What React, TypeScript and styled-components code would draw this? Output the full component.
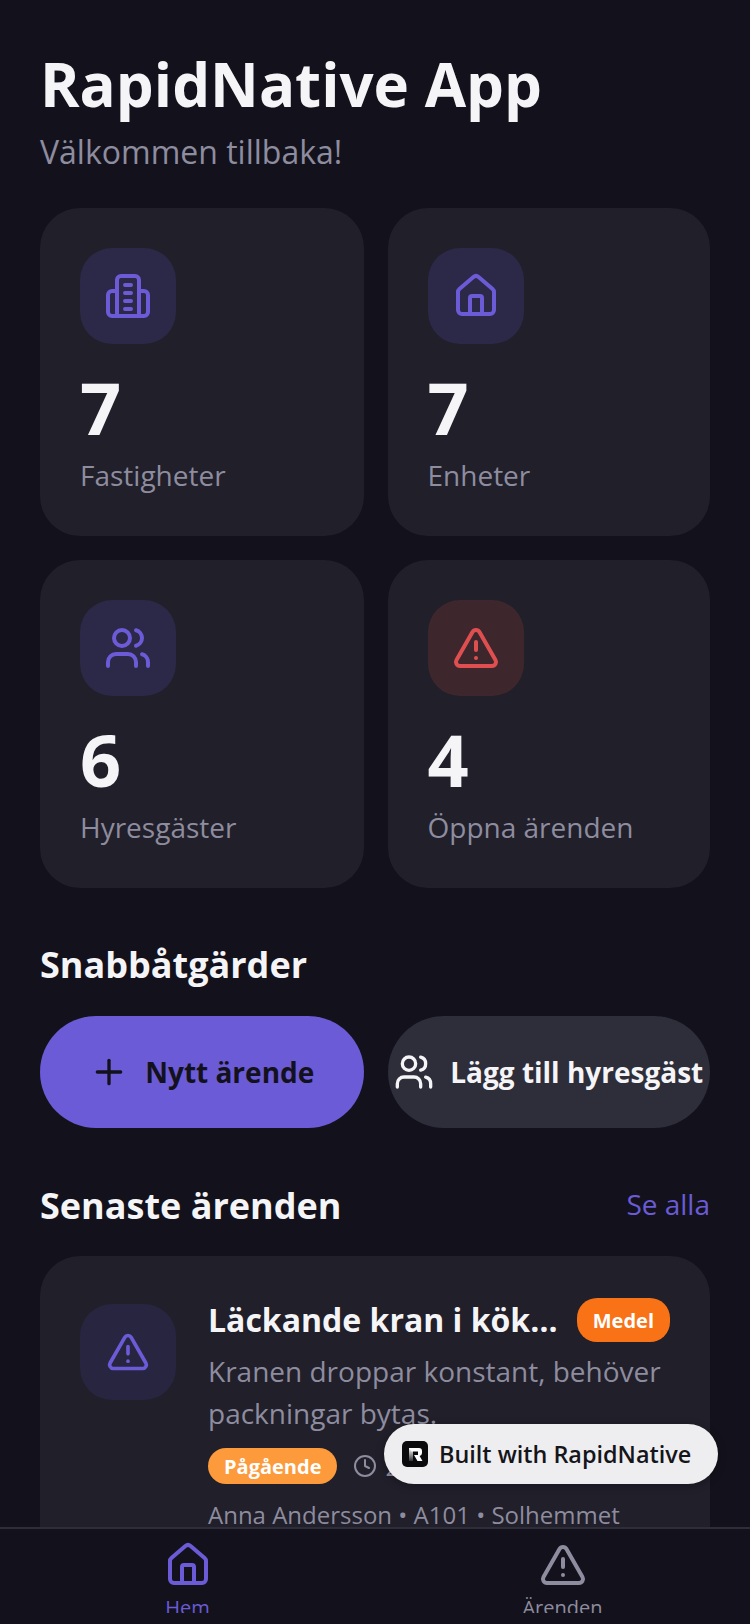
import styled, { createGlobalStyle } from "styled-components";
import { AlertTriangle, Clock, Home, Plus, Users } from "lucide-react";

const Global = createGlobalStyle`
  html, body {
    margin: 0;
    padding: 0;
    background: #13121c;
  }
  * {
    box-sizing: border-box;
  }
`;

const Screen = styled.div`
  position: relative;
  width: 750px;
  height: 1624px;
  display: flex;
  flex-direction: column;
  overflow: hidden;
  background: #13121c;
  font-family: "Open Sans", sans-serif;
`;

const Scroll = styled.div`
  height: 1527px;
  flex: none;
  overflow: hidden;
  padding: 44px 40px 0;
`;

const Title = styled.h1`
  margin: 0;
  font-size: 60px;
  line-height: 80px;
  font-weight: 700;
  color: #f5f5f7;
`;

const Subtitle = styled.p`
  margin: 4px 0 0;
  font-size: 32px;
  line-height: 48px;
  color: #8e8c9f;
`;

const Stats = styled.div`
  display: grid;
  grid-template-columns: 323.5px 322.5px;
  gap: 24px;
  margin-top: 32px;
`;

const StatCard = styled.div`
  height: 328px;
  padding: 40px;
  border-radius: 40px;
  background: #201f2a;
`;

const IconBox = styled.div<{ $danger?: boolean; $dim?: boolean }>`
  width: 96px;
  height: 96px;
  flex: none;
  display: flex;
  align-items: center;
  justify-content: center;
  border-radius: 32px;
  color: ${({ $danger }) => ($danger ? "#e04f4f" : "#6b5bd6")};
  background: ${({ $danger, $dim }) => ($danger ? "#3d272c" : $dim ? "#282540" : "#2c2847")};
`;

const StatValue = styled.div`
  margin-top: 19px;
  font-size: 72px;
  line-height: 88px;
  font-weight: 700;
  color: #f5f5f7;
`;

const StatLabel = styled.div`
  margin-top: 4px;
  font-size: 28px;
  line-height: 40px;
  color: #8e8c9f;
`;

const SectionTitle = styled.h2`
  margin: 0;
  font-size: 36px;
  line-height: 48px;
  font-weight: 700;
  color: #f5f5f7;
`;

const QuickTitle = styled(SectionTitle)`
  margin-top: 53px;
`;

const Actions = styled.div`
  display: grid;
  grid-template-columns: 323.5px 322.5px;
  gap: 24px;
  margin-top: 27px;
`;

const ActionButton = styled.div<{ $primary?: boolean }>`
  height: 112px;
  display: flex;
  align-items: center;
  justify-content: center;
  gap: 16px;
  border-radius: 56px;
  font-size: 28px;
  font-weight: 700;
  white-space: nowrap;
  color: ${({ $primary }) => ($primary ? "#13121c" : "#f5f5f7")};
  background: ${({ $primary }) => ($primary ? "#6b5bd6" : "#2e2d3a")};
`;

const SectionHeader = styled.div`
  display: flex;
  align-items: center;
  justify-content: space-between;
  margin-top: 54px;
`;

const SeeAll = styled.span`
  padding-bottom: 4px;
  font-size: 28px;
  color: #6b5bd6;
`;

const IssueCard = styled.div`
  display: flex;
  gap: 32px;
  margin-top: 26px;
  padding: 48px 40px 40px;
  border-radius: 40px;
  background: #201f2a;
`;

const IssueBody = styled.div`
  flex: 1;
  min-width: 0;
`;

const IssueHead = styled.div`
  display: flex;
  align-items: center;
  justify-content: space-between;
  margin-top: -6px;
`;

const IssueTitle = styled.div`
  width: 352px;
  font-size: 32px;
  line-height: 44px;
  font-weight: 700;
  color: #f5f5f7;
  white-space: nowrap;
  overflow: hidden;
  text-overflow: ellipsis;
`;

const Badge = styled.span<{ $color: string }>`
  display: inline-flex;
  align-items: center;
  padding: 0 16px;
  border-radius: 20px;
  font-size: 20px;
  font-weight: 700;
  color: #fff;
  background: ${({ $color }) => $color};
`;

const PriorityBadge = styled(Badge)`
  height: 44px;
`;

const StatusBadge = styled(Badge)`
  height: 36px;
`;

const IssueText = styled.p`
  margin: 8px 0 0;
  font-size: 28px;
  line-height: 42px;
  color: #8e8c9f;
`;

const MetaRow = styled.div`
  display: flex;
  align-items: center;
  gap: 16px;
  margin-top: 14px;
  color: #8e8c9f;
  font-size: 24px;
`;

const MetaTime = styled.span`
  display: inline-flex;
  align-items: center;
  gap: 8px;
  white-space: nowrap;
`;

const Tenant = styled.div`
  margin-top: 13px;
  font-size: 24px;
  line-height: 36px;
  white-space: nowrap;
  color: #8e8c9f;
`;

const TabBar = styled.nav`
  height: 97px;
  flex: none;
  display: grid;
  grid-template-columns: 1fr 1fr;
  border-top: 2px solid #2e2d3a;
  background: #13121c;
`;

const Tab = styled.div<{ $active?: boolean }>`
  height: 84px;
  display: flex;
  flex-direction: column;
  align-items: center;
  overflow: hidden;
  padding-top: 12px;
  color: ${({ $active }) => ($active ? "#6b5bd6" : "#8e8c9f")};

  svg {
    flex: none;
  }
`;

const TabLabel = styled.span`
  flex: none;
  margin-top: 5px;
  font-size: 20px;
  line-height: 28px;
`;

const BuiltWith = styled.div`
  position: absolute;
  left: 384px;
  top: 1424px;
  width: 334px;
  height: 60px;
  display: flex;
  align-items: center;
  gap: 11px;
  padding-left: 18px;
  border-radius: 30px;
  font-size: 23.4px;
  font-weight: 600;
  color: #15151a;
  background: #eeeef0;
  box-shadow: 0 2px 8px rgba(0, 0, 0, 0.25);
`;

const BuildingIcon = () => (
  <svg width="48" height="48" viewBox="0 0 24 24" fill="none" stroke="currentColor" strokeWidth="2" strokeLinecap="round" strokeLinejoin="round">
    <path d="M6.5 22V4a2 2 0 0 1 2-2h7a2 2 0 0 1 2 2v18" />
    <path d="M6.5 9.5H4a2 2 0 0 0-2 2V20a2 2 0 0 0 2 2h16a2 2 0 0 0 2-2v-8.5a2 2 0 0 0-2-2h-2.5" />
    <path d="M10.5 6.5h3M10.5 10.5h3M10.5 14.5h3M10.5 18.5h3" />
  </svg>
);

const LogoIcon = () => (
  <svg width="26" height="26" viewBox="0 0 26 26">
    <defs>
      <linearGradient id="logo-stem" x1="0" y1="0" x2="0" y2="1">
        <stop offset="0" stopColor="#fff" />
        <stop offset="1" stopColor="#333" />
      </linearGradient>
    </defs>
    <rect width="26" height="26" rx="5" fill="#0b0b0d" />
    <path d="M7 7h5l-1 3v10H7z" fill="url(#logo-stem)" />
    <path d="M7 7h10a3 3 0 0 1 3 3v2a3 3 0 0 1-2.4 2.9L20.5 20h-5l-3.5-6h4v-3.5H9.5z" fill="#fff" />
  </svg>
);

const STATS = [
  { value: 7, label: "Fastigheter", icon: <BuildingIcon /> },
  { value: 7, label: "Enheter", icon: <Home size={48} /> },
  { value: 6, label: "Hyresgäster", icon: <Users size={48} /> },
  { value: 4, label: "Öppna ärenden", icon: <AlertTriangle size={48} />, danger: true }
];

const App = () => {
  return (
    <Screen>
      <Global />
      <Scroll>
        <Title>RapidNative App</Title>
        <Subtitle>Välkommen tillbaka!</Subtitle>

        <Stats>
          {STATS.map((stat) => (
            <StatCard key={stat.label}>
              <IconBox $danger={stat.danger}>{stat.icon}</IconBox>
              <StatValue>{stat.value}</StatValue>
              <StatLabel>{stat.label}</StatLabel>
            </StatCard>
          ))}
        </Stats>

        <QuickTitle>Snabbåtgärder</QuickTitle>
        <Actions>
          <ActionButton $primary>
            <Plus size={40} />
            Nytt ärende
          </ActionButton>
          <ActionButton>
            <Users size={40} />
            Lägg till hyresgäst
          </ActionButton>
        </Actions>

        <SectionHeader>
          <SectionTitle>Senaste ärenden</SectionTitle>
          <SeeAll>Se alla</SeeAll>
        </SectionHeader>

        <IssueCard>
          <IconBox $dim>
            <AlertTriangle size={44} />
          </IconBox>
          <IssueBody>
            <IssueHead>
              <IssueTitle>Läckande kran i köket</IssueTitle>
              <PriorityBadge $color="#f97316">Medel</PriorityBadge>
            </IssueHead>
            <IssueText>Kranen droppar konstant, behöver packningar bytas.</IssueText>
            <MetaRow>
              <StatusBadge $color="#fd9a3c">Pågående</StatusBadge>
              <MetaTime>
                <Clock size={24} />
                2 dagar sedan
              </MetaTime>
            </MetaRow>
            <Tenant>Anna Andersson • A101 • Solhemmet</Tenant>
          </IssueBody>
        </IssueCard>
      </Scroll>

      <TabBar>
        <Tab $active>
          <Home size={48} />
          <TabLabel>Hem</TabLabel>
        </Tab>
        <Tab>
          <AlertTriangle size={48} />
          <TabLabel>Ärenden</TabLabel>
        </Tab>
      </TabBar>

      <BuiltWith>
        <LogoIcon />
        Built with RapidNative
      </BuiltWith>
    </Screen>
  );
};

export default App;
